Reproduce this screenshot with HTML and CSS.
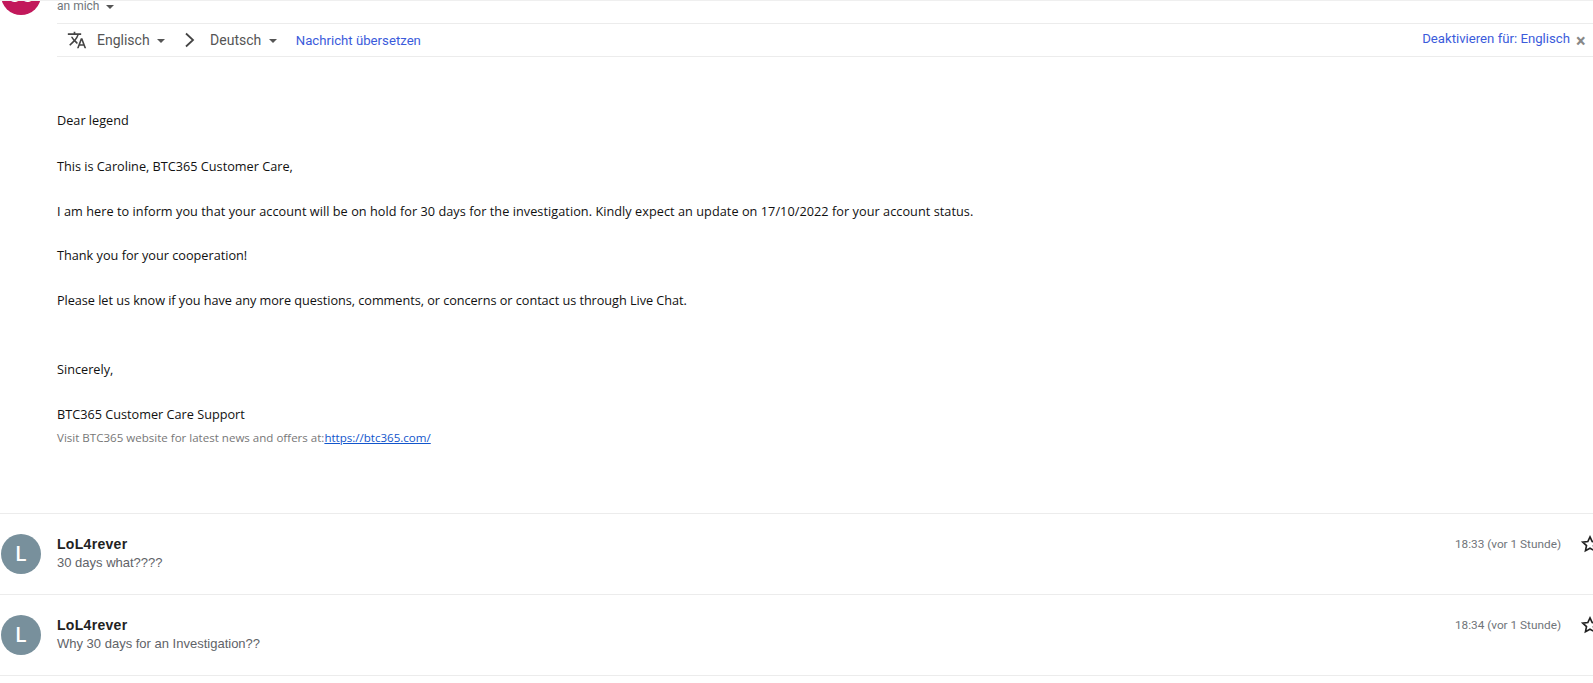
FILE: index.html
```html
<!DOCTYPE html>
<html lang="de">
<head>
    <meta charset="UTF-8">
    <title>BTC365 Customer Care</title>
    <link rel="stylesheet" href="styles.css">
</head>
<body>

<div class="page">
    <!-- OPEN MESSAGE -->
    <div class="message-head">
        <div class="avatar avatar-red">CC</div>
        <div class="recipient">an mich <span class="caret"></span></div>
    </div>

    <div class="translate-bar">
        <svg class="translate-icon" viewBox="0 0 24 24" width="24" height="24">
            <path d="M12.87 15.07l-2.54-2.51.03-.03A17.52 17.52 0 0 0 14.07 6H17V4h-7V2H8v2H1v2h11.17A15.7 15.7 0 0 1 9 11.35 15.7 15.7 0 0 1 6.69 8h-2a17.6 17.6 0 0 0 2.98 4.56l-5.09 5.02L4 19l5-5 3.11 3.11.76-2.04zM18.5 10h-2L12 22h2l1.12-3h4.75L21 22h2l-4.5-12zm-2.62 7l1.62-4.33L19.12 17h-3.24z"/>
        </svg>
        <span class="lang lang-from">Englisch <span class="caret"></span></span>
        <svg class="chevron" viewBox="0 0 12 16" width="12" height="16">
            <path d="M2 1.5L9 8l-7 6.5" fill="none" stroke="#444" stroke-width="1.8"/>
        </svg>
        <span class="lang lang-to">Deutsch <span class="caret"></span></span>
        <a class="translate-link" href="#">Nachricht übersetzen</a>
        <a class="disable-link" href="#">Deaktivieren für: Englisch</a>
        <span class="close">×</span>
    </div>

    <div class="mail-body">
        <p class="gap-first">Dear legend</p>
        <p>This is Caroline, BTC365 Customer Care,</p>
        <p class="wide">I am here to inform you that your account will be on hold for 30 days for the investigation. Kindly expect an update on 17/10/2022 for your account status.</p>
        <p>Thank you for your cooperation!</p>
        <p class="narrow">Please let us know if you have any more questions, comments, or concerns or contact us through Live Chat.</p>
        <p class="gap-big">Sincerely,</p>
        <p>BTC365 Customer Care Support</p>
        <p class="small">Visit BTC365 website for latest news and offers at:<a href="#">https://btc365.com/</a></p>
    </div>

    <!-- COLLAPSED REPLIES -->
    <div class="reply">
        <div class="avatar avatar-grey">L</div>
        <div class="reply-text">
            <div class="sender">LoL4rever</div>
            <div class="snippet">30 days what????</div>
        </div>
        <div class="time">18:33 (vor 1 Stunde)</div>
        <svg class="star" viewBox="0 0 24 24" width="24" height="24">
            <path d="M12 3.5l2.6 5.6 6.1.7-4.5 4.2 1.2 6L12 17l-5.4 3 1.2-6-4.5-4.2 6.1-.7z" fill="none" stroke="#222" stroke-width="2"/>
        </svg>
    </div>
    <div class="reply">
        <div class="avatar avatar-grey">L</div>
        <div class="reply-text">
            <div class="sender">LoL4rever</div>
            <div class="snippet">Why 30 days for an Investigation??</div>
        </div>
        <div class="time">18:34 (vor 1 Stunde)</div>
        <svg class="star" viewBox="0 0 24 24" width="24" height="24">
            <path d="M12 3.5l2.6 5.6 6.1.7-4.5 4.2 1.2 6L12 17l-5.4 3 1.2-6-4.5-4.2 6.1-.7z" fill="none" stroke="#222" stroke-width="2"/>
        </svg>
    </div>
</div>

</body>
</html>
```

FILE: styles.css
```css
html, body {
    margin: 0;
    height: 100%;
    overflow: hidden;
    background: white;
}
body {
    font-family: Roboto, Arial, sans-serif;
    color: #222;
}
.page {
    width: 1593px;
    height: 683px;
    overflow: hidden;
    border-top: 1px solid #efefef;
    box-sizing: border-box;
}
.avatar {
    width: 40px;
    height: 40px;
    border-radius: 50%;
    color: white;
    font-size: 20px;
    font-weight: 500;
    line-height: 40px;
    text-align: center;
    flex-shrink: 0;
}
.avatar-red {
    background: #c2185b;
}
.avatar-grey {
    background: #78909c;
}
.caret {
    display: inline-block;
    width: 0;
    height: 0;
    margin-left: 4px;
    vertical-align: middle;
    border-left: 4px solid transparent;
    border-right: 4px solid transparent;
    border-top: 4px solid #555;
}
.message-head {
    display: flex;
    gap: 16px;
    padding-left: 1px;
    height: 22px;
}
.message-head .avatar {
    margin-top: -26px;
}
.recipient {
    font-size: 12px;
    line-height: 11px;
    color: #70757a;
}
.translate-bar {
    display: flex;
    align-items: center;
    height: 32px;
    margin-left: 57px;
    border-top: 1px solid #ececec;
    border-bottom: 1px solid #ececec;
    font-size: 14px;
    color: #555;
}
.translate-icon {
    width: 20px;
    height: 20px;
    margin-left: 10px;
    fill: #444;
}
.lang-from {
    margin-left: 10px;
}
.chevron {
    margin-left: 19px;
}
.lang-to {
    margin-left: 14px;
}
.translate-link, .disable-link {
    color: #3b5bdb;
    text-decoration: none;
    font-size: 13.2px;
}
.translate-link {
    margin-left: 19px;
}
.disable-link {
    margin-left: auto;
    margin-bottom: 4px;
}
.close {
    width: 23px;
    padding-left: 6px;
    box-sizing: border-box;
    font-size: 18px;
    font-weight: bold;
    color: #888;
}
.mail-body {
    height: 457px;
    padding-left: 57px;
    box-sizing: border-box;
    border-bottom: 1px solid #ececec;
    font-family: "Open Sans", sans-serif;
    font-size: 12.7px;
    line-height: 18px;
    color: #111;
}
.mail-body p {
    margin: 0 0 26.5px;
}
.mail-body .gap-first {
    padding-top: 54px;
    margin-bottom: 28px;
}
.mail-body .wide {
    letter-spacing: 0.05px;
}
.mail-body .narrow {
    letter-spacing: -0.04px;
}
.mail-body .gap-big {
    margin-top: 51.5px;
}
.mail-body .small {
    margin-top: -20.5px;
    font-size: 11.55px;
    color: #777;
}
.small a {
    color: #1155cc;
}
.reply {
    display: flex;
    gap: 16px;
    height: 81px;
    padding: 20px 0 0 1px;
    box-sizing: border-box;
    border-bottom: 1px solid #ececec;
}
.reply-text {
    flex: 1;
}
.sender {
    font-family: "Liberation Sans", Arial, sans-serif;
    font-size: 14px;
    font-weight: bold;
    letter-spacing: 0.3px;
    line-height: 20px;
    color: #222;
}
.snippet {
    font-family: "Liberation Sans", Arial, sans-serif;
    font-size: 13px;
    line-height: 18px;
    color: #5f6368;
}
.time {
    margin-right: 3px;
    font-size: 11.8px;
    line-height: 20px;
    color: #70757a;
}
.star {
    width: 20px;
    height: 20px;
    margin-right: -7px;
}
```
